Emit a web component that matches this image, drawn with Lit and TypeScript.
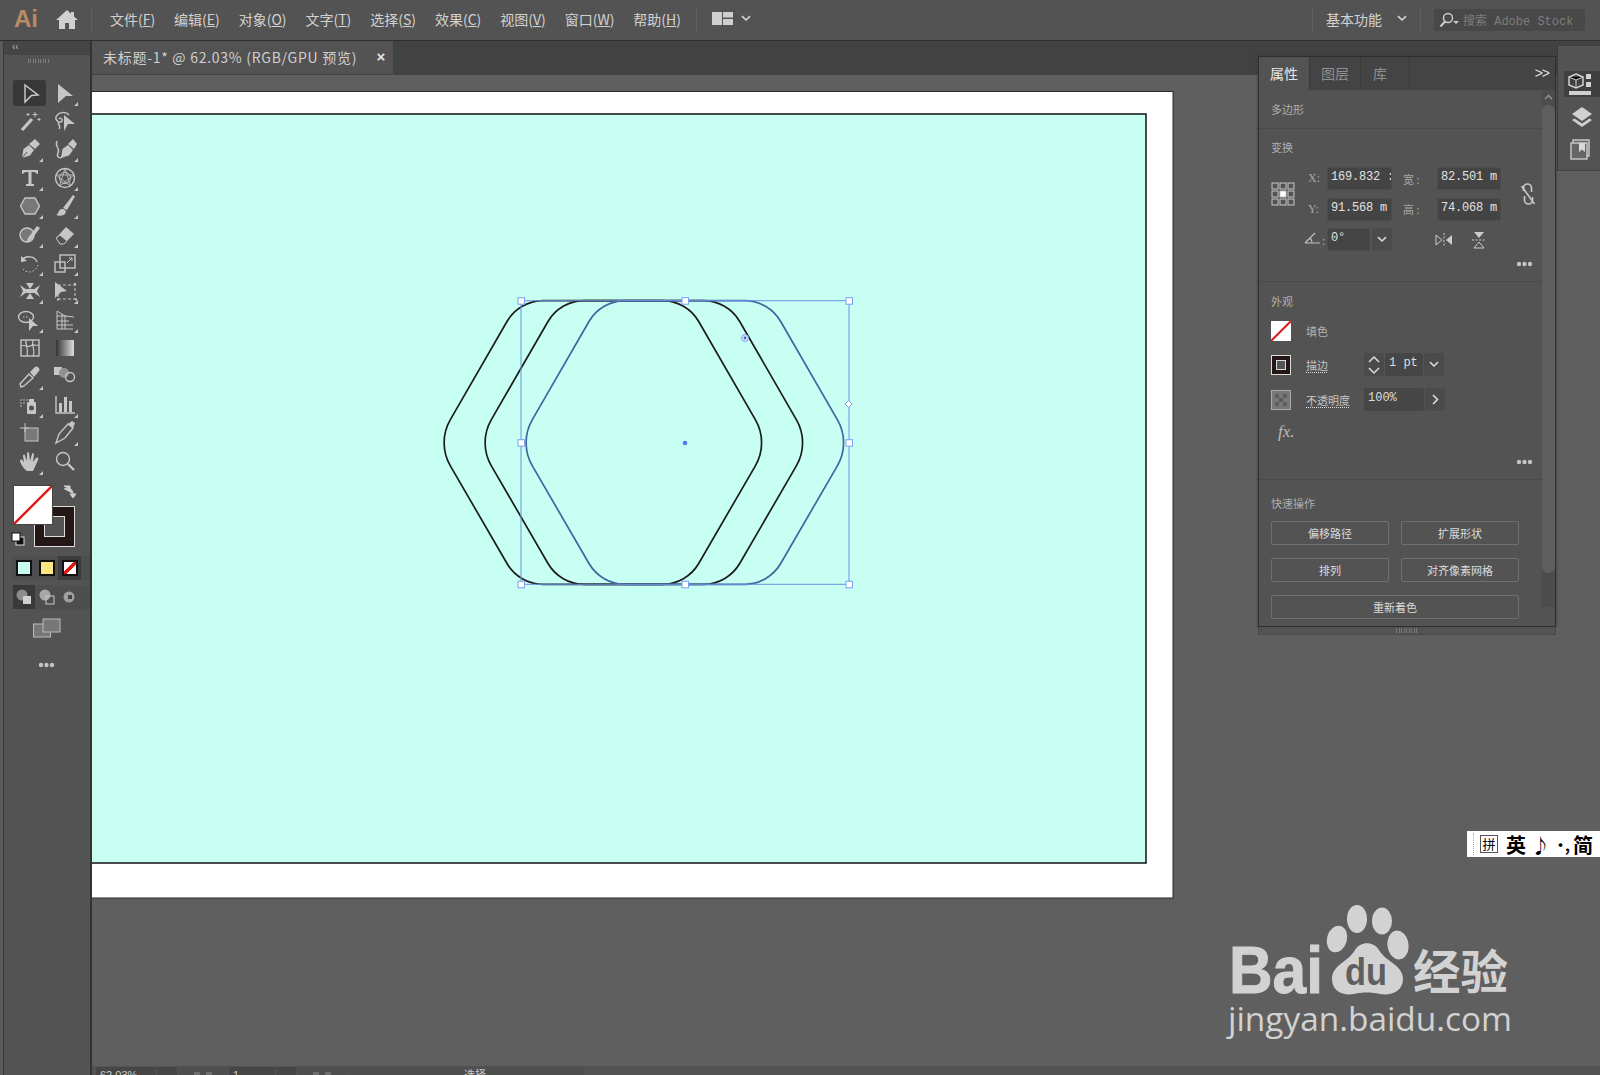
import { LitElement, html, css, svg } from "lit";
import { customElement } from "lit/decorators.js";

const C = "#c6c6c6";
const S = `fill:none;stroke:${C};stroke-width:1.4`;
const marker = svg`<path d="M9 13H13V9Z" fill="${C}"/>`;
const dots = (pts: number[][]) => pts.map(([x, y]) => svg`<circle cx="${x}" cy="${y}" r="0.8" fill="${C}"/>`);

const tools: any[] = [
  svg`<path d="M-5-8 8 2 1.5 2.5-5 9Z" fill="none" stroke="#d0d0d0" stroke-width="1.4"/>`,
  svg`<path d="M-7-9 8 3 1 3-7 10Z" fill="${C}"/>${marker}`,
  svg`<path d="M-8 9 2-2" stroke="${C}" stroke-width="3.2"/><path d="M5-9V-4M2.5-6.5H7.5M9-3V0M7.5-1.5H10.5M-2-8V-5M-3.5-6.5H-.5" stroke="${C}"/>`,
  svg`<path d="M4-6C1-10-7-9-9-4C-10 0-5 3-3 0C-2-2-5-4-6-2M-7 2C-5 5-5 7-6 8" style="${S}"/><path d="M-1-6 10 3 3 3-1 10Z" fill="${C}"/>`,
  svg`<path d="M-8 9-6.5 0-1-4 4 1 0 6.5Z" fill="${C}"/><path d="M-1-5 5-10 10-5 5 0Z" fill="${C}"/><path d="M-8 9-3 3" stroke="#535353"/>${marker}`,
  svg`<path d="M-4 9-2.5 0 3-4 8 1 4 6.5Z" fill="${C}"/><path d="M3-5 8-10 12-5 9 0Z" fill="${C}"/><path d="M-8-8C-11-2-4-1-7 4C-9 8-5 10-3 8" style="${S}"/>${marker}`,
  svg`<path d="M-8-8H8V-4H7C6-6 4-6 1.5-6V6H4V8H-4V6H-1.5V-6C-4-6-6-6-7-4H-8Z" fill="${C}"/>${marker}`,
  svg`<circle r="9.5" style="${S}"/><circle r="5.5" style="fill:none;stroke:${C};stroke-width:1"/><path d="M0-9.5 5.5 8M0-9.5-5.5 8M-9-3H9M-9-3 5.5 8M9-3-5.5 8" stroke="${C}" stroke-width=".8"/>${marker}`,
  svg`<path d="M-9.5 0-5-8H5L9.5 0 5 8H-5Z" fill="#787878" stroke="${C}" stroke-width="1.4"/>${marker}`,
  svg`<path d="M-2 2 8-11 10-9.5 2 4Z" fill="${C}"/><path d="M-9 9C-6 8-7 3-3 3C0 3 2 5 0 8C-2 10-6 10-9 9Z" fill="${C}"/>${marker}`,
  svg`<circle cx="-3" cy="0" r="7" fill="#787878" stroke="${C}" stroke-width="1.4"/><path d="M-4 8-2 3 7-9 10-7 1 5Z" fill="${C}"/>${marker}`,
  svg`<path d="M-9 3 1-8 9-1-1 9H-5Z" fill="${C}"/><path d="M-9 3-5 9H-1L2 6-5 0Z" fill="#535353" stroke="${C}"/>${marker}`,
  svg`<path d="M-8-3C-4-8 5-7 7-1" style="${S}"/><path d="M-9-7-9-1-3-2Z" fill="${C}"/><path d="M8 2C7 6 3 9-1 9C-4 9-7 7-8 4" fill="none" stroke="${C}" stroke-dasharray="1.5 2"/>${marker}`,
  svg`<rect x="-10" y="-1" width="10" height="10" style="${S}"/><rect x="-5" y="-8" width="15" height="13" style="${S}"/><path d="M2 0 7-5M4-5H7V-2" stroke="${C}" fill="none"/>${marker}`,
  svg`<path d="M-10-6-3-1-3 1-10 6-7 0ZM10-6 3-1 3 1 10 6 7 0ZM0-2-4-8H4ZM0 2-4 8H4Z" fill="${C}"/><rect x="-4" y="-2" width="8" height="4" fill="${C}"/>${marker}`,
  svg`<rect x="-7" y="-6" width="17" height="14" fill="none" stroke="${C}" stroke-dasharray="3 2"/><path d="M-10-9 2 0-4 1-10 7Z" fill="${C}"/><path d="M-8 8.5h2M10 8.5h2M9-7h2" stroke="${C}" stroke-width="2"/>${marker}`,
  svg`<ellipse cx="-4" cy="-3" rx="7.5" ry="5.5" style="${S}"/><path d="M-7-3H-1" stroke="${C}" stroke-dasharray="1.5 1.5"/><path d="M-1-2 8 6 3 6-1 11Z" fill="${C}"/>${marker}`,
  svg`<path d="M-8-9V9H8M-8-9 0-4V9M-8-4H1M-8 1 4 1M-8 5H8M-3-6V9M0-4 9-3" style="fill:none;stroke:${C};stroke-width:1"/>${marker}`,
  svg`<rect x="-9" y="-8" width="18" height="16" style="${S}"/><path d="M-9-2C-4-4-2 0 0-2C3-4 5-2 9-3M-4-8C-5-3-1 0-3 8M3-8C1-2 6 2 3 8" style="fill:none;stroke:${C};stroke-width:1.2"/>`,
  svg`<defs><linearGradient id="g"><stop offset="0" stop-color="#333"/><stop offset="1" stop-color="#ddd"/></linearGradient></defs><rect x="-9" y="-8" width="18" height="16" fill="url(#g)"/>`,
  svg`<path d="M-9 10-10 7-1-3 3 1-6 9Z" style="${S}"/><path d="M0-5 5-10C7-12 11-8 9-6L4 0Z" fill="${C}"/>${marker}`,
  svg`<rect x="-11" y="-10" width="8" height="8" fill="${C}"/><circle cx="-1" cy="-4" r="5" fill="#909090"/><circle cx="5" cy="0" r="4.5" style="${S}"/>`,
  svg`${dots([[-9, -5], [-6, -5], [-3, -5], [-9, -2], [-6, -2], [-9, 1]])}<path d="M-1-6H4V-3H-1Z" fill="${C}"/><rect x="-3" y="-3" width="9" height="12" rx="1" fill="${C}"/><circle cx="1.5" cy="3" r="2.5" fill="#535353"/>${marker}`,
  svg`<path d="M-9-9V8H10" style="${S}"/><rect x="-6" y="-2" width="3" height="9" fill="${C}"/><rect x="-1" y="-8" width="3" height="15" fill="${C}"/><rect x="4" y="-4" width="3" height="11" fill="${C}"/>${marker}`,
  svg`<rect x="-5" y="-5" width="13" height="13" fill="#787878" stroke="${C}"/><path d="M-5-10V-1M-10-5H-1" stroke="${C}"/>`,
  svg`<path d="M-9 10-6 1 3-9 8-5 0 5Z" style="${S}"/><path d="M3-9 8-5 10-10 7-12Z" fill="${C}"/>${marker}`,
  svg`<path d="M-3 9C-6 7-9 3-10-1C-10-3-8-3-7-1L-6 0-7-6C-7-8-5-8-5-6L-3-1-3-9C-3-10-1-10-1-9L0-1 2-8C2-10 4-9 4-7L3 0 6-4C8-5 9-4 8-2L4 7 3 9Z" fill="${C}"/>${marker}`,
  svg`<circle cx="-2" cy="-3" r="6.5" style="${S}"/><path d="M3 2 9 8" stroke="${C}" stroke-width="2.4"/>`,
];

const dotsRow = html`<svg class="more" width="17" height="6" viewBox="0 0 17 6"><circle cx="3" cy="3" r="2.2"/><circle cx="8.5" cy="3" r="2.2"/><circle cx="14" cy="3" r="2.2"/></svg>`;
const chev = html`<svg width="10" height="7" viewBox="0 0 10 7"><path d="M1 1.2 5 5 9 1.2" fill="none" stroke="#d8d8d8" stroke-width="1.6"/></svg>`;

function hex(dx: number) {
  const cy = 442.7, t = 300.7, b = 584.3;
  const r = 42, e = 24, r2 = 46, e2 = 27;
  const ax = 437 + dx, tl = 519 + dx, tr = 686.7 + dx, bx = 768.7 + dx;
  const cos = 0.5, sin = 0.866;
  return `M${tl + e} ${t}H${tr - e}A${r} ${r} 0 0 1 ${tr + e * cos} ${t + e * sin}L${bx - e2 * cos} ${cy - e2 * sin}A${r2} ${r2} 0 0 1 ${bx - e2 * cos} ${cy + e2 * sin}L${tr + e * cos} ${b - e * sin}A${r} ${r} 0 0 1 ${tr - e} ${b}H${tl + e}A${r} ${r} 0 0 1 ${tl - e * cos} ${b - e * sin}L${ax + e2 * cos} ${cy + e2 * sin}A${r2} ${r2} 0 0 1 ${ax + e2 * cos} ${cy - e2 * sin}L${tl - e * cos} ${t + e * sin}A${r} ${r} 0 0 1 ${tl + e} ${t}Z`;
}
const handles = [[521, 300.7], [685, 300.7], [849, 300.7], [521, 442.7], [849, 442.7], [521, 584.3], [685, 584.3], [849, 584.3]];

@customElement("app-root")
export class AppRoot extends LitElement {
  static styles = css`
    :host { display: block; position: relative; width: 1600px; height: 1075px; overflow: hidden; background: #5f5f5f; font-family: "Noto Sans CJK SC", "Liberation Sans", sans-serif; color: #d4d4d4; }
    svg { display: block; }
    .top { height: 40px; background: #535353; border-bottom: 1px solid #2f2f2f; display: flex; align-items: center; box-sizing: content-box; }
    .logo { width: 51px; padding: 0 0 2px 14px; box-sizing: border-box; font: bold 24px "Liberation Sans", sans-serif; color: #b98a63; }
    .home { width: 40px; padding-left: 4px; box-sizing: border-box; }
    .sep { width: 1px; height: 26px; background: #5f5f5f; flex: none; }
    .menu { display: flex; gap: 18.9px; padding: 0 0 3px 18px; font-size: 14px; color: #d2d2d2; width: 604px; box-sizing: border-box; flex: none; }
    .menu span { white-space: nowrap; }
    .layout { display: flex; align-items: center; gap: 8px; margin-left: 15px; padding-bottom: 3px; }
    .spacer { flex: 1; }
    .workspace { display: flex; align-items: center; gap: 15px; padding: 0 13px 3px; font-size: 14px; }
    .search { width: 151px; height: 22px; margin: 0 15px 0 13px; background: #484848; border-radius: 2px; display: flex; align-items: center; gap: 4px; padding-left: 5px; box-sizing: border-box; font: 12px "Liberation Mono", "Noto Sans CJK SC", monospace; color: #7d7d7d; white-space: nowrap; }
    .main { display: flex; height: 1034px; }
    .strip { width: 4px; background: #5b5b5b; border-right: 1px solid #3a3a3a; box-sizing: border-box; }
    .toolbar { width: 86px; background: #535353; border-right: 2px solid #333; box-sizing: content-box; flex: none; display: flex; flex-direction: column; }
    .tb-head { height: 14px; background: #454545; font: 10px "Liberation Sans", sans-serif; color: #bbb; padding-left: 8px; line-height: 11px; }
    .grip { height: 4px; width: 22px; margin: 4px auto 0 24px; background: repeating-linear-gradient(90deg, #808080 0 1px, transparent 1px 2.5px); }
    .tools { display: grid; grid-template-columns: 33px 38px; grid-auto-rows: 28.4px; margin: 15.5px 0 0 9px; }
    .tool { display: flex; align-items: center; justify-content: center; }
    .tool.on { background: #383838; border-radius: 3px; height: 26px; align-self: center; }
    .colors { position: relative; height: 62px; margin-top: 9px; }
    .fill { position: absolute; left: 9px; top: 0; width: 40px; height: 40px; background: #fff; border: 1px solid #444; box-sizing: border-box; z-index: 1; }
    .stroke { position: absolute; left: 30px; top: 21px; width: 41px; height: 41px; background: #231815; border: 1px solid #ddd; box-sizing: border-box; display: flex; align-items: center; justify-content: center; }
    .stroke i { display: block; width: 21px; height: 21px; background: #535353; border: 1px solid #ddd; box-sizing: border-box; }
    .swap { position: absolute; left: 58px; top: 0; }
    .defcol { position: absolute; left: 7px; top: 47px; }
    .swatches { display: grid; grid-template-columns: 23px 23px 23px; height: 24px; margin: 9px 0 0 8px; background: #4e4e4e; }
    .swatches div { display: flex; align-items: center; justify-content: center; }
    .swatches div.sel { background: #3c3c3c; }
    .swatches b { display: block; width: 16px; height: 16px; border: 2px solid #111; box-sizing: border-box; }
    .modes { display: grid; grid-template-columns: 22px 23px 22px; height: 24px; margin: 5px 0 0 9px; background: #4e4e4e; }
    .modes div { display: flex; align-items: center; justify-content: center; }
    .modes div.sel { background: #393939; }
    .screen { margin: 9px 0 0 29px; }
    .tb-more { margin: 24px 0 0 34px; }
    .more circle { fill: #c4c4c4; }
    .work { flex: 1; display: flex; flex-direction: column; min-width: 0; }
    .tabs { height: 34px; background: #424242; display: flex; flex: none; }
    .tab { width: 301px; height: 33px; background: #535353; display: flex; align-items: center; justify-content: space-between; padding: 0 7px 2px 11px; box-sizing: border-box; font-size: 14px; letter-spacing: .72px; color: #cfcfcf; white-space: nowrap; }
    .tab b { font: bold 15px "Liberation Sans", sans-serif; color: #e6e6e6; }
    .canvas { position: relative; flex: 1; background: #5f5f5f; overflow: hidden; }
    .art { position: absolute; left: 0; top: 0; }
    .status { height: 9px; background: #535353; flex: none; overflow: hidden; display: flex; gap: 1px; padding-left: 4px; font: 11px "Liberation Sans", "Noto Sans CJK SC", sans-serif; color: #ccc; }
    .status span { display: block; background: #464646; height: 12px; margin-top: 1px; padding: 0 4px; line-height: 16px; box-sizing: border-box; flex: none; }
    .status .nav { background: #4e4e4e; display: flex; justify-content: center; gap: 6px; padding-top: 5px; }
    .status .nav i { display: block; width: 6px; height: 6px; background: #6e6e6e; }
    .panel { position: absolute; left: 1258px; top: 56px; width: 298px; height: 571px; background: #535353; border: 1px solid #2e2e2e; box-sizing: border-box; display: flex; flex-direction: column; box-shadow: 0 0 3px #3a3a3a; }
    .ptabs { height: 33px; background: #444; display: flex; align-items: stretch; font-size: 14px; color: #8f8f8f; flex: none; }
    .ptabs span { width: 50px; display: flex; align-items: center; justify-content: center; border-right: 1px solid #3a3a3a; box-sizing: content-box; padding-bottom: 1px; }
    .ptabs span.on { background: #535353; color: #e8e8e8; }
    .ptabs span:nth-child(3) { width: 38px; padding-right: 10px; }
    .ptabs em { margin-left: auto; padding: 0 6px 2px 0; font: 14px "Liberation Sans", sans-serif; letter-spacing: -1px; color: #ddd; align-self: center; }
    .pbody { flex: 1; display: flex; min-height: 0; }
    .content { flex: 1; min-width: 0; }
    .scroll { width: 13px; background: #4c4c4c; flex: none; position: relative; height: 517px; }
    .scroll svg { position: absolute; left: 2px; top: 4px; }
    .scroll i { position: absolute; left: 0; right: 0; top: 15px; height: 468px; background: #5f5f5f; border-radius: 6px; display: block; }
    .sec { border-bottom: 1px solid #4a4a4a; padding-left: 12px; box-sizing: border-box; position: relative; }
    .title { font-size: 11px; color: #aeaeae; line-height: 16px; }
    .s1 { height: 39px; padding-top: 11px; }
    .s2 { height: 153px; padding-top: 10px; }
    .s3 { height: 198px; padding-top: 11px; }
    .xf { display: grid; grid-template-columns: 36px 20px 65px 45px 64px 36px; grid-auto-rows: 23px; row-gap: 7.5px; margin-top: 12px; align-items: center; font-size: 11px; color: #a8a8a8; }
    .num { height: 23px; background: #444; border: 1px solid #4c4c4c; border-radius: 2px; box-sizing: border-box; font: 12px/19px "Liberation Mono", "Noto Sans CJK SC", monospace; letter-spacing: -.2px; color: #e2e2e2; padding-left: 3px; overflow: hidden; white-space: nowrap; }
    .lab { font: 11px "Noto Sans CJK SC", sans-serif; color: #a8a8a8; white-space: nowrap; }
    .lab.x { font-family: "Liberation Serif", serif; font-size: 12px; padding-left: 1px; }
    .link { grid-row: span 2; grid-column: 6; padding-left: 11px; }
    .combo { display: flex; gap: 2px; }
    .combo .num { flex: 1; }
    .combo .dd { width: 20px; height: 23px; background: #4b4b4b; border: 1px solid #4c4c4c; border-radius: 2px; box-sizing: border-box; display: flex; align-items: center; justify-content: center; flex: none; }
    .flips { grid-column: 4 / span 2; display: flex; align-items: center; gap: 19px; padding-left: 43px; }
    .arow { display: grid; grid-template-columns: 35px 58px auto; align-items: center; font-size: 11px; color: #b4b4b4; height: 23px; }
    .sw { width: 20px; height: 20px; box-sizing: border-box; }
    .dot { text-decoration: underline dotted #ddd; text-underline-offset: 2px; color: #c4c4c4; white-space: nowrap; }
    .box { display: flex; height: 23px; gap: 1px; }
    .box > div { background: #4b4b4b; border-radius: 2px; display: flex; align-items: center; justify-content: center; box-sizing: border-box; }
    .box .v { background: #464646; font: 12px "Liberation Mono", monospace; color: #ddd; justify-content: flex-start; padding: 0 0 3px 4px; }
    .btns { display: grid; grid-template-columns: 118px 118px; column-gap: 12px; row-gap: 13px; margin-top: 10px; }
    .btn { height: 24px; border: 1px solid #707070; border-radius: 2px; box-sizing: border-box; display: flex; align-items: center; justify-content: center; font-size: 11px; color: #dcdcdc; }
    .btn.wide { grid-column: span 2; }
    .pgrip { position: absolute; left: 1258px; top: 627px; width: 298px; height: 8px; background: #535353; border: 1px solid #4a4a4a; border-top: 0; box-sizing: border-box; display: flex; justify-content: center; align-items: center; }
    .pgrip i { display: block; width: 23px; height: 5px; background: repeating-linear-gradient(90deg, #777 0 1px, transparent 1px 2.5px); }
    .dock { position: absolute; left: 1557px; top: 46px; width: 43px; height: 125px; background: #535353; border-left: 1px solid #3a3a3a; border-bottom: 1px solid #444; box-sizing: border-box; display: flex; flex-direction: column; align-items: center; }
    .dock .d1 { margin-top: 25px; width: 37px; height: 26px; margin-left: 6px; background: #404040; display: flex; align-items: center; justify-content: center; flex: none; }
    .dock svg.d { margin-top: 9px; }
    .ime { position: absolute; left: 1467px; top: 831px; width: 133px; height: 26px; background: #fff; color: #000; display: flex; align-items: center; gap: 5px; padding-left: 6px; box-sizing: border-box; overflow: hidden; font: bold 20px "Noto Sans CJK SC", sans-serif; white-space: nowrap; }
    .ime i { display: block; width: 1px; height: 22px; border-left: 1px dotted #aaa; flex: none; }
    .ime u { text-decoration: none; font: 13px "Noto Sans CJK SC", sans-serif; width: 18px; height: 18px; line-height: 16px; text-align: center; border: 1px solid #555; box-sizing: border-box; margin-right: 3px; flex: none; }
    .ime .note { font-size: 19px; width: 17px; }
    .ime .punct { font-size: 15px; width: 15px; letter-spacing: -3px; }
    .wm { position: absolute; left: 1220px; top: 900px; }
  `;

  render() {
    return html`
      <div class="top">
        <div class="logo">Ai</div>
        <div class="home"><svg width="24" height="22" viewBox="0 0 24 22"><path d="M12 1 1 11H4V20H10V14H14V20H20V11H23L19 7.4V3H16V4.8Z" fill="#d0d0d0"/></svg></div>
        <div class="sep"></div>
        <div class="menu">
          <span>文件(<u>F</u>)</span><span>编辑(<u>E</u>)</span><span>对象(<u>O</u>)</span><span>文字(<u>T</u>)</span><span>选择(<u>S</u>)</span><span>效果(<u>C</u>)</span><span>视图(<u>V</u>)</span><span>窗口(<u>W</u>)</span><span>帮助(<u>H</u>)</span>
        </div>
        <div class="sep"></div>
        <div class="layout">
          <svg width="21" height="13" viewBox="0 0 21 13"><path d="M0 0H10V13H0ZM11 0H21V5.5H11ZM11 7H21V13H11Z" fill="#cfcfcf"/></svg>
          ${chev}
        </div>
        <div class="spacer"></div>
        <div class="sep"></div>
        <div class="workspace">基本功能 ${chev}</div>
        <div class="sep"></div>
        <div class="search">
          <svg width="20" height="16" viewBox="0 0 20 16"><circle cx="9" cy="6" r="4.5" fill="none" stroke="#ccc" stroke-width="1.5"/><path d="M6 9.5 1.5 14.5" stroke="#ccc" stroke-width="2"/><path d="M14 9H20L17 12Z" fill="#ccc"/></svg>
          搜索 Adobe Stock
        </div>
      </div>
      <div class="main">
        <div class="strip"></div>
        <div class="toolbar">
          <div class="tb-head">‹‹</div>
          <div class="grip"></div>
          <div class="tools">
            ${tools.map((t, i) => html`<div class="tool ${i === 0 ? "on" : ""}"><svg width="28" height="28" viewBox="-14 -14 28 28">${t}</svg></div>`)}
          </div>
          <div class="colors">
            <div class="fill"><svg width="38" height="38" viewBox="0 0 38 38"><path d="M0 38 38 0" stroke="#dd1818" stroke-width="2.4"/></svg></div>
            <div class="stroke"><i></i></div>
            <svg class="swap" width="14" height="14" viewBox="0 0 14 14"><path d="M2 1 8 1V4L2 1ZM2 4C7 2 11 4 11 9M8 9H14L11 13Z" fill="#cfcfcf" stroke="#cfcfcf"/></svg>
            <svg class="defcol" width="14" height="14" viewBox="0 0 14 14"><rect x="5" y="5" width="8" height="8" fill="#111" stroke="#ddd"/><rect x="1" y="1" width="8" height="8" fill="#fff" stroke="#111"/></svg>
          </div>
          <div class="swatches">
            <div><b style="background:#c7fff3"></b></div>
            <div><b style="background:#ffe680"></b></div>
            <div class="sel"><b style="background:linear-gradient(135deg,#fff 0 38%,#e01818 38% 62%,#fff 62%)"></b></div>
          </div>
          <div class="modes">
            <div class="sel"><svg width="18" height="16" viewBox="0 0 18 16"><circle cx="7" cy="6" r="5.5" fill="#8c8c8c"/><rect x="8" y="7" width="8" height="8" fill="#d0d0d0"/></svg></div>
            <div><svg width="18" height="16" viewBox="0 0 18 16"><circle cx="7" cy="6" r="5.5" fill="#a8a8a8"/><rect x="8" y="7" width="8" height="8" fill="none" stroke="#c8c8c8"/></svg></div>
            <div><svg width="14" height="14" viewBox="0 0 14 14"><circle cx="7" cy="7" r="5.5" fill="#a0a0a0"/><rect x="6" y="5" width="4" height="4" fill="#444"/></svg></div>
          </div>
          <svg class="screen" width="28" height="20" viewBox="0 0 28 20"><rect x="0.5" y="6" width="17" height="13" fill="#777" stroke="#bbb"/><rect x="10" y="1" width="17" height="13" fill="#777" stroke="#bbb"/></svg>
          <svg class="more tb-more" width="17" height="6" viewBox="0 0 17 6"><circle cx="3" cy="3" r="2.2"/><circle cx="8.5" cy="3" r="2.2"/><circle cx="14" cy="3" r="2.2"/></svg>
        </div>
        <div class="work">
          <div class="tabs">
            <div class="tab">未标题-1* @ 62.03% (RGB/GPU 预览)<b>×</b></div>
          </div>
          <div class="canvas">
            <svg class="art" width="1508" height="991" viewBox="92 75 1508 991">
              <rect x="91" y="91.5" width="1082" height="806.5" fill="#fff" stroke="#2a2a2a"/>
              <rect x="91" y="114" width="1055" height="749" fill="#c7fff3" stroke="#111" stroke-width="1.5"/>
              <path d="${hex(0)}" fill="none" stroke="#1c1c1c" stroke-width="1.7"/>
              <path d="${hex(41)}" fill="none" stroke="#1c1c1c" stroke-width="1.7"/>
              <path d="${hex(82)}" fill="none" stroke="#41659f" stroke-width="1.7"/>
              <rect x="521" y="300.7" width="328" height="283.6" fill="none" stroke="#6a92e6"/>
              ${handles.map(([x, y]) => svg`<rect x="${x - 3}" y="${y - 3}" width="6.5" height="6.5" fill="#fff" stroke="#7d9ff0"/>`)}
              <circle cx="685" cy="443" r="2.3" fill="#4f7cf0"/>
              <circle cx="745" cy="338" r="3.4" fill="#dfe8ff" stroke="#7d9ff0"/><circle cx="745" cy="338" r="1.4" fill="#3f66c8"/>
              <path d="M848.5 400.5 852 404 848.5 407.5 845 404Z" fill="#fff" stroke="#7d9ff0"/>
            </svg>
          </div>
          <div class="status">
            <span style="width:60px">62.03%</span>
            <span style="width:20px"></span>
            <span class="nav" style="width:50px"><i></i><i></i></span>
            <span style="width:46px">1</span>
            <span style="width:20px"></span>
            <span class="nav" style="width:50px"><i></i><i></i></span>
            <span style="width:236px;padding-left:116px;background:#4e4e4e">选择</span>
          </div>
        </div>
      </div>

      <div class="panel">
        <div class="ptabs"><span class="on">属性</span><span>图层</span><span>库</span><em>&gt;&gt;</em></div>
        <div class="pbody">
          <div class="content">
            <div class="sec s1"><div class="title">多边形</div></div>
            <div class="sec s2">
              <div class="title">变换</div>
              <div class="xf">
                <svg width="24" height="24" viewBox="0 0 24 24" style="grid-row:span 2">
                  ${[1, 9, 17].flatMap((y) => [1, 9, 17].map((x) => svg`<rect x="${x}" y="${y}" width="6" height="6" fill="${x === 9 && y === 9 ? "#fff" : "none"}" stroke="#c8c8c8"/>`))}
                </svg>
                <div class="lab x">X:</div><div class="num">169.832 :</div><div class="lab">　宽 :</div><div class="num">82.501 m</div>
                <svg class="link" width="33" height="24" viewBox="0 0 22 24"><path d="M4 4 17 22" stroke="#c8c8c8" stroke-width="1.6"/><path d="M6 9V6A4 4 0 0 1 14 6V10M15 15V18A4 4 0 0 1 7 18V14" fill="none" stroke="#c8c8c8" stroke-width="1.6"/></svg>
                <div class="lab x" style="grid-column:2">Y:</div><div class="num">91.568 m</div><div class="lab">　高 :</div><div class="num">74.068 m</div>
                <div class="lab" style="display:flex;justify-content:flex-end;gap:1px;padding-right:2px;grid-column:1 / span 2"><svg width="17" height="12" viewBox="0 0 17 12"><path d="M1 11H16M1 11 11 1M8 11C8 8 7 7 6 6" fill="none" stroke="#c0c0c0" stroke-width="1.2"/></svg>:</div>
                <div class="combo"><div class="num">0°</div><div class="dd">${chev}</div></div>
                <div class="flips">
                  <svg width="18" height="14" viewBox="0 0 18 14"><path d="M1 2 7 7 1 12Z" fill="none" stroke="#ccc"/><path d="M17 2 11 7 17 12Z" fill="#ccc"/><path d="M9 0V14" stroke="#ccc" stroke-dasharray="2 1.5"/></svg>
                  <svg width="14" height="18" viewBox="0 0 14 18"><path d="M2 1 7 7 12 1Z" fill="#ccc"/><path d="M2 17 7 11 12 17Z" fill="none" stroke="#ccc"/><path d="M0 9H14" stroke="#ccc" stroke-dasharray="2 1.5"/></svg>
                </div>
              </div>
              <div style="position:absolute;right:9px;bottom:14px">${dotsRow}</div>
            </div>
            <div class="sec s3">
              <div class="title">外观</div>
              <div class="arow" style="margin-top:10px">
                <svg class="sw" viewBox="0 0 20 20"><rect width="20" height="20" fill="#fff"/><path d="M0 20 20 0" stroke="#dd1818" stroke-width="2"/></svg>
                <span>填色</span>
              </div>
              <div class="arow" style="margin-top:11px">
                <svg class="sw" viewBox="0 0 20 20"><rect x=".5" y=".5" width="19" height="19" fill="#231815" stroke="#ddd"/><rect x="5.5" y="5.5" width="9" height="9" fill="#555" stroke="#ddd"/></svg>
                <span class="dot">描边</span>
                <div class="box">
                  <div style="width:20px"><svg width="12" height="20" viewBox="0 0 12 20"><path d="M1 7 6 2 11 7M1 13 6 18 11 13" fill="none" stroke="#ddd" stroke-width="1.5"/></svg></div>
                  <div class="v" style="width:38px">1 pt</div>
                  <div style="width:20px">${chev}</div>
                </div>
              </div>
              <div class="arow" style="margin-top:12px">
                <svg class="sw" viewBox="0 0 20 20"><rect x=".5" y=".5" width="19" height="19" fill="#777" stroke="#aaa"/><path d="M4 4h4v4H4zM12 4h4v4h-4zM8 8h4v4H8zM4 12h4v4H4zM12 12h4v4h-4z" fill="#5c5c5c"/></svg>
                <span class="dot">不透明度</span>
                <div class="box">
                  <div class="v" style="width:60px">100%</div>
                  <div style="width:20px"><svg width="7" height="11" viewBox="0 0 7 11"><path d="M1 1 5.5 5.5 1 10" fill="none" stroke="#ddd" stroke-width="1.6"/></svg></div>
                </div>
              </div>
              <div style="font:italic 17px 'Liberation Serif',serif;color:#bbb;margin:11px 0 0 7px">fx.</div>
              <div style="position:absolute;right:9px;bottom:14px">${dotsRow}</div>
            </div>
            <div class="sec" style="border:0;padding-top:15px">
              <div class="title">快速操作</div>
              <div class="btns">
                <div class="btn">偏移路径</div><div class="btn">扩展形状</div>
                <div class="btn">排列</div><div class="btn">对齐像素网格</div>
                <div class="btn wide">重新着色</div>
              </div>
            </div>
          </div>
          <div class="scroll"><i></i><svg width="9" height="6" viewBox="0 0 9 6" style="z-index:1"><path d="M1 5 4.5 1.5 8 5" fill="none" stroke="#999" stroke-width="1.3"/></svg></div>
        </div>
      </div>
      <div class="pgrip"><i></i></div>

      <div class="dock">
        <div class="d1"><svg width="28" height="24" viewBox="0 0 28 24"><path d="M8 2 15 5V13L8 16 1 13V5Z" fill="none" stroke="#d0d0d0" stroke-width="1.5"/><path d="M1 5 8 8 15 5M8 8V16" stroke="#d0d0d0"/><rect x="18" y="2" width="5" height="5" fill="#d0d0d0"/><rect x="18" y="10" width="5" height="5" fill="#d0d0d0"/><rect x="1" y="19" width="22" height="4" fill="#d0d0d0"/></svg></div>
        <svg class="d" style="margin-left:5px" width="22" height="22" viewBox="0 0 22 22"><path d="M11 1 21 8 11 15 1 8Z" fill="#d0d0d0"/><path d="M3.5 12.5 1 14 11 21 21 14 18.5 12.5 11 17.5Z" fill="#d0d0d0"/></svg>
        <svg class="d" style="margin:11px 0 0 2px" width="20" height="21" viewBox="0 0 20 21"><rect x="3" y="1" width="16" height="16" fill="#666" stroke="#ccc" stroke-width="1.4"/><rect x="1" y="4" width="16" height="16" fill="#666" stroke="#ccc" stroke-width="1.4"/><path d="M9 4H15V13L12 10.5 9 13Z" fill="#d8d8d8"/></svg>
      </div>

      <div class="ime"><i></i><u>拼</u><span>英</span><span class="note">♪</span><span class="punct">•,</span><span>简</span></div>

      <svg class="wm" width="310" height="150" viewBox="1220 900 310 150">
        <g fill="#d2d2d2">
          <text x="1229" y="993" font-family="Liberation Sans" font-weight="700" font-size="66" textLength="94" lengthAdjust="spacingAndGlyphs" stroke="#d2d2d2" stroke-width="1">Bai</text>
          <ellipse cx="1357" cy="919" rx="10" ry="14"/>
          <ellipse cx="1382" cy="921" rx="10" ry="13.5"/>
          <ellipse cx="1337" cy="939" rx="10" ry="13.5" transform="rotate(15 1337 939)"/>
          <ellipse cx="1398" cy="945" rx="10.5" ry="14.5" transform="rotate(-8 1398 945)"/>
          <path d="M1332 979C1332 965 1348 962 1355 950C1360 941 1374 941 1379 950C1386 962 1403 965 1403 979C1403 992 1390 996 1380 994C1372 992 1362 992 1354 994C1344 996 1332 992 1332 979Z"/>
          <text x="1413" y="989" font-family="Noto Sans CJK SC" font-weight="700" font-size="47" textLength="95" lengthAdjust="spacingAndGlyphs">经验</text>
          <text x="1228" y="1031" font-family="Open Sans" font-size="33" textLength="284" lengthAdjust="spacingAndGlyphs">jingyan.baidu.com</text>
        </g>
        <text x="1345" y="985" fill="#5f5f5f" font-family="Liberation Sans" font-weight="700" font-size="38" textLength="42" lengthAdjust="spacingAndGlyphs">du</text>
      </svg>
    `;
  }
}
